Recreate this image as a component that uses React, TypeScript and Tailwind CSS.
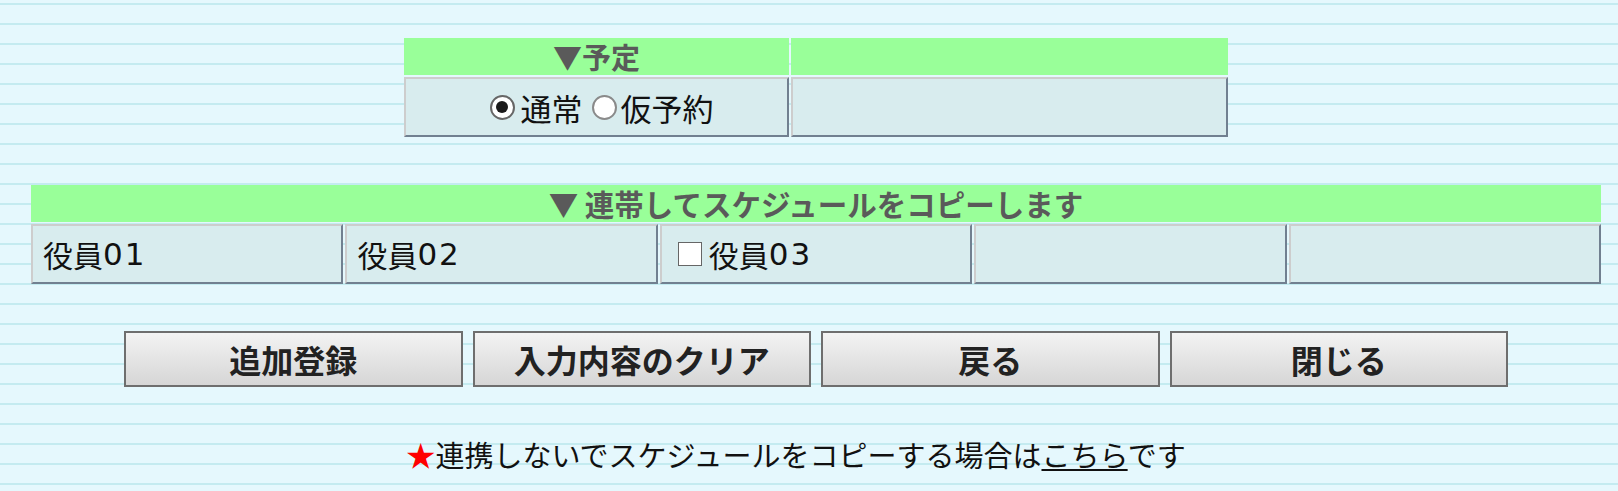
import React from "react";

const cellBorder =
  "border-2 border-t-[#cdcdcd] border-l-[#cdcdcd] border-r-[#718090] border-b-[#718090] bg-[#d8ecee]";

function Radio({ checked }: { checked: boolean }) {
  return (
    <span
      className={
        "inline-flex items-center justify-center w-[25px] h-[25px] rounded-full bg-white border-2 " +
        (checked ? "border-[#666]" : "border-[#8a8a8a]")
      }
    >
      {checked ? <span className="block w-[12px] h-[12px] rounded-full bg-[#1a1a1a]" /> : null}
    </span>
  );
}

function Name({ n }: { n: string }) {
  return (
    <>
      役員<span className="font-['DejaVu_Sans',sans-serif] text-[31px] tracking-[2px]">{n}</span>
    </>
  );
}

export default function App() {
  return (
    <div className="min-h-screen w-full bg-[#e5f8fd] bg-[image:repeating-linear-gradient(to_bottom,#e5f8fd_0px,#e5f8fd_3px,#c4ebf0_3px,#c4ebf0_5px,#e5f8fd_5px,#e5f8fd_20px)] font-['Noto_Sans_CJK_JP',sans-serif] text-[#111] pt-[38px] pb-[20px]">
      <div className="ml-[31px] w-[1570px]">
        {/* Table 1 */}
        <div className="w-[824px] mx-auto flex flex-col gap-[2px]">
          <div className="flex gap-[2px] h-[37px]">
            <div className="w-[385px] bg-[#99ff99] flex items-center justify-center text-[29px] font-bold text-[#5a5a5a] leading-none">
              ▼予定
            </div>
            <div className="flex-1 bg-[#99ff99]" />
          </div>
          <div className="flex gap-[2px] h-[60px]">
            <div className={"w-[385px] flex items-center justify-center pl-[10px] text-[31px] leading-none " + cellBorder}>
              <Radio checked />
              <span className="ml-[6px]">通常</span>
              <span className="ml-[9px] flex">
                <Radio checked={false} />
              </span>
              <span className="ml-[4px]">仮予約</span>
            </div>
            <div className={"flex-1 " + cellBorder} />
          </div>
        </div>

        {/* Table 2 */}
        <div className="mt-[48px] flex flex-col gap-[2px]">
          <div className="h-[37px] bg-[#99ff99] flex items-center justify-center text-[29.5px] font-bold text-[#5a5a5a] leading-none">
            ▼ 連帯してスケジュールをコピーします
          </div>
          <div className="grid grid-cols-5 gap-[2px] h-[60px]">
            <div className={"flex items-center pl-[10px] text-[30px] leading-none " + cellBorder}>
              <Name n="01" />
            </div>
            <div className={"flex items-center pl-[10px] text-[30px] leading-none " + cellBorder}>
              <Name n="02" />
            </div>
            <div className={"flex items-center pl-[16px] text-[30px] leading-none " + cellBorder}>
              <span className="inline-block w-[24px] h-[24px] bg-white border border-[#666] mr-[7px]" />
              <Name n="03" />
            </div>
            <div className={cellBorder} />
            <div className={cellBorder} />
          </div>
        </div>

        {/* Buttons */}
        <div className="mt-[47px] w-[1384px] mx-auto grid grid-cols-4 gap-[10px]">
          {["追加登録", "入力内容のクリア", "戻る", "閉じる"].map((t) => (
            <button
              key={t}
              className="h-[56px] border-2 border-[#6e6e6e] bg-gradient-to-b from-[#f3f3f3] to-[#d6d6d6] text-[32px] font-bold text-[#222] leading-none flex items-center justify-center"
            >
              {t}
            </button>
          ))}
        </div>

        {/* Bottom note */}
        <div className="mt-[49px] flex justify-center pr-[40px] text-[29px] leading-[36px] text-[#111]">
          <span>
            <span className="text-[#ff0000]">★</span>連携しないでスケジュールをコピーする場合は
            <a className="underline cursor-pointer">こちら</a>です
          </span>
        </div>
      </div>
    </div>
  );
}
